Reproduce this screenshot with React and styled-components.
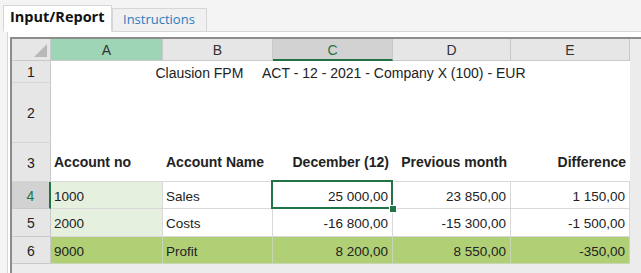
import React from 'react'
import styled, { createGlobalStyle } from 'styled-components'

const GlobalStyle = createGlobalStyle`
    html, body {
        margin: 0;
        padding: 0;
        height: 100%;
        overflow: hidden;
        background: #f4f4f4;
        font-family: "Liberation Sans", Arial, sans-serif;
    }
    #root {
        height: 100%;
    }
`

const green = '#217346'

const columns = ['A', 'B', 'C', 'D', 'E']

const rows = [
    { n: 4, cells: ['1000', 'Sales', '25 000,00', '23 850,00', '1 150,00'], active: true },
    { n: 5, cells: ['2000', 'Costs', '-16 800,00', '-15 300,00', '-1 500,00'] },
    { n: 6, cells: ['9000', 'Profit', '8 200,00', '8 550,00', '-350,00'], total: true },
]

const App = () => {
    return (
        <Page>
            <GlobalStyle />
            <TabBar>
                <Tab $active>Input/Report</Tab>
                <Tab>Instructions</Tab>
            </TabBar>
            <Panel>
                <Sheet>
                    <Grid>
                        <Corner><Triangle /></Corner>
                        {columns.map((c) => (
                            <ColHead key={c} $marked={c === 'A'} $selected={c === 'C'}>{c}</ColHead>
                        ))}

                        <RowHead>1</RowHead>
                        <Title>{'Clausion FPM     ACT - 12 - 2021 - Company X (100) - EUR'}</Title>

                        <RowHead>2</RowHead>
                        <Blank />

                        <RowHead>3</RowHead>
                        <Heading>Account no</Heading>
                        <Heading>Account Name</Heading>
                        <Heading $right>December (12)</Heading>
                        <Heading $right>Previous month</Heading>
                        <Heading $right>Difference</Heading>

                        {rows.map((row) => (
                            <React.Fragment key={row.n}>
                                <RowHead $selected={row.active} $line>{row.n}</RowHead>
                                {row.cells.map((val, i) => (
                                    <Cell
                                        key={i}
                                        $right={i > 1}
                                        $total={row.total}
                                        $tint={i === 0 && !row.total}
                                    >
                                        {val}
                                        {row.active && i === 2 && (
                                            <>
                                                <Selection />
                                                <Handle />
                                            </>
                                        )}
                                    </Cell>
                                ))}
                            </React.Fragment>
                        ))}
                    </Grid>
                </Sheet>
            </Panel>
        </Page>
    )
}

export default App

const Page = styled.div`
    height: 100%;
    display: flex;
    flex-direction: column;
`
const TabBar = styled.div`
    height: 31px;
    display: flex;
    align-items: flex-end;
    padding-left: 3px;
    position: relative;
    z-index: 1;
`
const Tab = styled.div`
    box-sizing: border-box;
    height: ${(p) => (p.$active ? '27px' : '24px')};
    margin-bottom: -1px;
    padding: 0 0 ${(p) => (p.$active ? '4px' : '3px')} ${(p) => (p.$active ? '6px' : '10px')};
    display: flex;
    align-items: center;
    font-family: "Open Sans", "Noto Sans", sans-serif;
    font-size: ${(p) => (p.$active ? '14.5px' : '13px')};
    font-weight: ${(p) => (p.$active ? 700 : 400)};
    color: ${(p) => (p.$active ? '#111' : '#2b7cc0')};
    background: ${(p) => (p.$active ? '#fff' : '#f0f0f0')};
    border: 1px solid #d6d6d6;
    border-bottom: ${(p) => (p.$active ? '1px solid #fff' : '1px solid #d6d6d6')};
    width: ${(p) => (p.$active ? '109px' : '95px')};
    white-space: nowrap;
`
const Panel = styled.div`
    flex: 1;
    display: flex;
    margin-left: 7px;
    padding: 5px 0 0 2px;
    background: #fff;
    border-top: 1px solid #d6d6d6;
    border-left: 1px solid #d6d6d6;
    min-height: 0;
`
const Sheet = styled.div`
    flex: 1;
    background: #ececec;
    border-top: 2px solid #8c8c8c;
    border-left: 2px solid #8c8c8c;
    overflow: hidden;
`
const Grid = styled.div`
    display: grid;
    grid-template-columns: 39px 112px 110px 120px 118px 119px;
    grid-template-rows: 22px 22px 60px 39px 27px 28px 27px;
    width: max-content;
    background: #fff;
    font-size: 13.5px;
    color: #222;
`
const HeadBase = styled.div`
    box-sizing: border-box;
    display: flex;
    align-items: center;
    justify-content: center;
    background: #e6e6e6;
    border-right: 1px solid #c9c9c9;
    border-bottom: 1px solid #c9c9c9;
    font-size: 14px;
    color: #333;
`
const Corner = styled(HeadBase)`
    position: relative;
`
const Triangle = styled.div`
    position: absolute;
    right: 3px;
    bottom: 3px;
    width: 0;
    height: 0;
    border-left: 13px solid transparent;
    border-bottom: 13px solid #b8b8b8;
`
const ColHead = styled(HeadBase)`
    background: ${(p) => (p.$marked ? '#9fd5b7' : p.$selected ? '#d2d2d2' : '#e6e6e6')};
    color: ${(p) => (p.$selected ? green : '#333')};
    border-bottom: ${(p) => (p.$selected ? `2px solid ${green}` : '1px solid #c9c9c9')};
    padding-top: ${(p) => (p.$selected ? '1px' : '0')};
`
const RowHead = styled(HeadBase)`
    background: ${(p) => (p.$selected ? '#d2d2d2' : '#e6e6e6')};
    color: ${(p) => (p.$selected ? green : '#222')};
    border-right: ${(p) => (p.$selected ? `2px solid ${green}` : '1px solid #c9c9c9')};
    border-bottom-color: ${(p) => (p.$line ? '#c9c9c9' : '#d6d6d6')};
    padding-top: 1px;
`
const Title = styled.div`
    grid-column: 2 / 7;
    display: flex;
    align-items: center;
    justify-content: center;
    white-space: pre;
    font-size: 14px;
    padding-top: 2px;
`
const Blank = styled.div`
    grid-column: 2 / 7;
`
const Heading = styled.div`
    box-sizing: border-box;
    display: flex;
    align-items: center;
    justify-content: ${(p) => (p.$right ? 'flex-end' : 'flex-start')};
    padding: 0 4px 0 3px;
    font-size: 14px;
    font-weight: 700;
    white-space: nowrap;
    border-bottom: 1px solid #d9d9d9;
`
const Cell = styled.div`
    box-sizing: border-box;
    position: relative;
    display: flex;
    align-items: center;
    justify-content: ${(p) => (p.$right ? 'flex-end' : 'flex-start')};
    padding: 2px 4px 0 3px;
    background: ${(p) => (p.$total ? '#b1cf75' : p.$tint ? '#e6f0df' : '#fff')};
    border-right: 1px solid ${(p) => (p.$total ? '#c9d6b4' : '#d9d9d9')};
    border-bottom: 1px solid ${(p) => (p.$total ? '#c9d6b4' : '#d9d9d9')};
`
const Selection = styled.div`
    position: absolute;
    top: -2px;
    left: -2px;
    right: -1px;
    bottom: -1px;
    border: 2px solid ${green};
    pointer-events: none;
    z-index: 1;
`
const Handle = styled.div`
    position: absolute;
    right: -5px;
    bottom: -5px;
    width: 6px;
    height: 6px;
    background: ${green};
    border: 1px solid #fff;
    z-index: 2;
`
